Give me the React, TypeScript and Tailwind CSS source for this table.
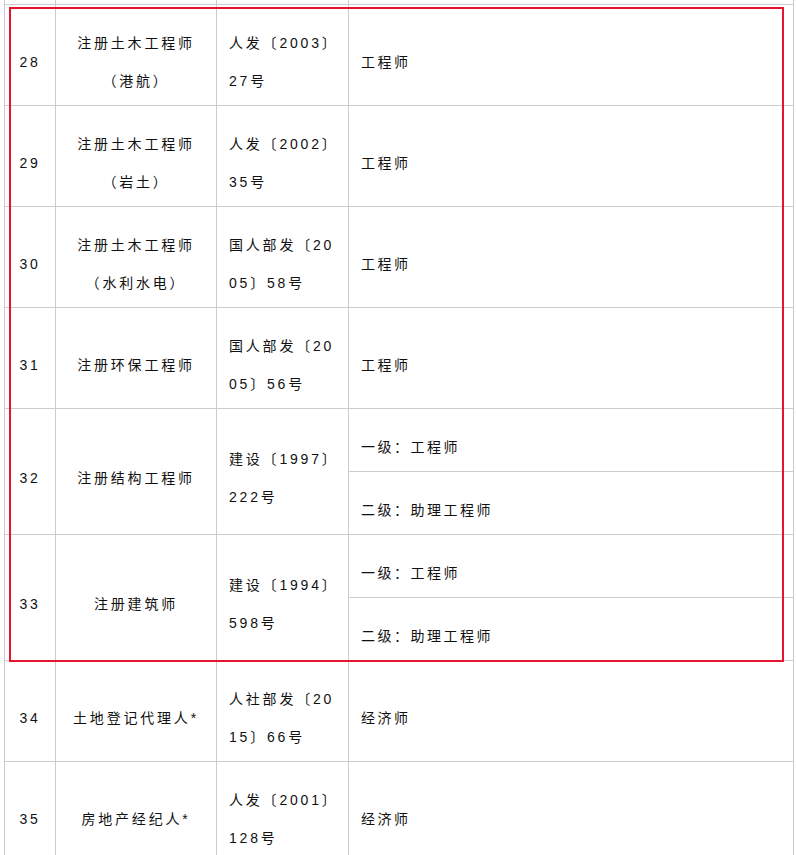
import React from "react";

type Row = {
  no: string;
  name: string[];
  doc: string[];
  titles: string[];
};

const rows: Row[] = [
  { no: "28", name: ["注册土木工程师", "（港航）"], doc: ["人发〔2003〕", "27号"], titles: ["工程师"] },
  { no: "29", name: ["注册土木工程师", "（岩土）"], doc: ["人发〔2002〕", "35号"], titles: ["工程师"] },
  { no: "30", name: ["注册土木工程师", "（水利水电）"], doc: ["国人部发〔20", "05〕58号"], titles: ["工程师"] },
  { no: "31", name: ["注册环保工程师"], doc: ["国人部发〔20", "05〕56号"], titles: ["工程师"] },
  { no: "32", name: ["注册结构工程师"], doc: ["建设〔1997〕", "222号"], titles: ["一级：工程师", "二级：助理工程师"] },
  { no: "33", name: ["注册建筑师"], doc: ["建设〔1994〕", "598号"], titles: ["一级：工程师", "二级：助理工程师"] },
  { no: "34", name: ["土地登记代理人*"], doc: ["人社部发〔20", "15〕66号"], titles: ["经济师"] },
  { no: "35", name: ["房地产经纪人*"], doc: ["人发〔2001〕", "128号"], titles: ["经济师"] },
];

const cell = "border border-[#cccccc] align-middle pt-[19px] pb-[5px] leading-[38px]";

function Lines({ lines }: { lines: string[] }) {
  return (
    <>
      {lines.map((l) => (
        <div key={l} className="whitespace-nowrap">
          {l}
        </div>
      ))}
    </>
  );
}

export default function App() {
  return (
    <div
      className="relative h-[855px] w-[796px] overflow-hidden bg-white text-[14px] tracking-[2.8px] text-[#111111]"
      style={{ fontFamily: '"Liberation Sans", "Noto Sans CJK SC", sans-serif' }}
    >
      <table className="ml-[4px] w-[789px] table-fixed border-collapse">
        <colgroup>
          <col className="w-[51px]" />
          <col className="w-[161px]" />
          <col className="w-[132px]" />
          <col className="w-[445px]" />
        </colgroup>
        <tbody>
          <tr className="h-[4px]">
            <td className="border-x border-b border-[#cccccc] p-0" />
            <td className="border-x border-b border-[#cccccc] p-0" />
            <td className="border-x border-b border-[#cccccc] p-0" />
            <td className="border-x border-b border-[#cccccc] p-0" />
          </tr>
          {rows.map((r) => {
            const span = r.titles.length;
            return (
              <React.Fragment key={r.no}>
                <tr>
                  <td rowSpan={span} className={`${cell} text-center`}>
                    {r.no}
                  </td>
                  <td rowSpan={span} className={`${cell} text-center`}>
                    <Lines lines={r.name} />
                  </td>
                  <td rowSpan={span} className={`${cell} pl-[12px] text-left`}>
                    <Lines lines={r.doc} />
                  </td>
                  <td className={`${cell} pl-[12px] text-left tracking-[2.5px]`}>{r.titles[0]}</td>
                </tr>
                {r.titles.slice(1).map((t) => (
                  <tr key={t}>
                    <td className={`${cell} pl-[12px] text-left tracking-[2.5px]`}>{t}</td>
                  </tr>
                ))}
              </React.Fragment>
            );
          })}
        </tbody>
      </table>

      {/* red highlight frame */}
      <div className="pointer-events-none absolute left-[9px] top-[7px] h-[655px] w-[775px] border-2 border-[#e8132e]" />
    </div>
  );
}
